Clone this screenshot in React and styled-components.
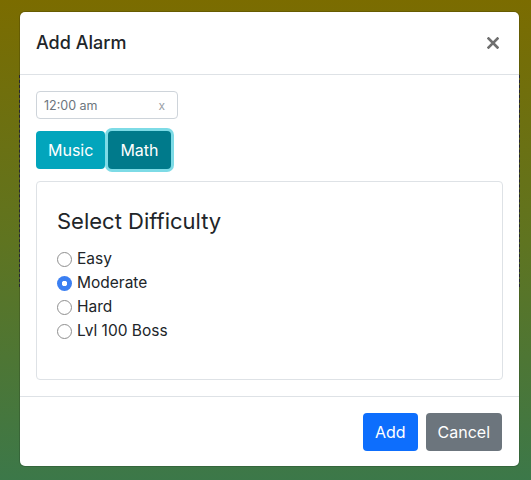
import React, { useState } from 'react';
import styled, { createGlobalStyle } from 'styled-components';

const GlobalStyle = createGlobalStyle`
  html, body {
    margin: 0;
    padding: 0;
  }
  body {
    font-family: Inter, "Liberation Sans", sans-serif;
    color: #212529;
  }
`;

const Backdrop = styled.div`
  position: relative;
  width: 531px;
  height: 480px;
  background: linear-gradient(180deg, #7b6c00 0%, #5f7420 50%, #3c7849 100%);
  padding: 12px 0 0 20px;
  box-sizing: border-box;
  overflow: hidden;
`;

/* faint dashed outline of the page content peeking out behind the dialog */
const GhostOutline = styled.div`
  position: absolute;
  left: 19px;
  top: 75px;
  width: 499px;
  height: 210px;
  border: 1px dashed #2e2e3e;
`;

const Dialog = styled.div`
  position: relative;
  width: 499px;
  background: #fff;
  border-radius: 5px;
  box-shadow: 0 0 0 1px rgba(0, 0, 0, 0.15);
  display: flex;
  flex-direction: column;
`;

const Header = styled.div`
  display: flex;
  align-items: center;
  justify-content: space-between;
  padding: 16px;
  border-bottom: 1px solid #dee2e6;
`;

const Title = styled.h5`
  margin: 0;
  font-size: 18px;
  font-weight: 500;
  line-height: 30px;
`;

const CloseButton = styled.button`
  border: 0;
  background: none;
  padding: 0;
  margin-right: 3px;
  width: 14px;
  height: 14px;
  display: flex;
  align-items: center;
  justify-content: center;
  cursor: pointer;
`;

const Body = styled.div`
  padding: 16px;
  display: flex;
  flex-direction: column;
  align-items: flex-start;
`;

const TimeField = styled.div`
  width: 142px;
  height: 28px;
  box-sizing: border-box;
  border: 1px solid #ced4da;
  border-radius: 4px;
  display: flex;
  align-items: center;
  justify-content: space-between;
  padding: 0 12px 0 7px;
  font-size: 12.5px;
  color: #6c757d;
`;

const ClearX = styled.span`
  font-size: 12px;
  color: #9aa0a6;
`;

const ModeRow = styled.div`
  display: flex;
  gap: 3px;
  margin-top: 12px;
`;

const ModeButton = styled.button`
  height: 38px;
  padding: 0 12px;
  border: 0;
  border-radius: 4px;
  font-family: inherit;
  font-size: 16px;
  color: #fff;
  background: ${(p) => (p.$active ? '#007a8b' : '#02a5bc')};
  box-shadow: ${(p) => (p.$active ? '0 0 0 3px #7ddbe6' : 'none')};
  cursor: pointer;
`;

const Card = styled.div`
  align-self: stretch;
  margin-top: 12px;
  border: 1px solid #dee2e6;
  border-radius: 4px;
  padding: 24px 20px 36px;
`;

const CardTitle = styled.h4`
  margin: 0 0 11px;
  font-size: 22px;
  font-weight: 400;
  line-height: 30px;
`;

const OptionList = styled.div`
  display: flex;
  flex-direction: column;
`;

const OptionLabel = styled.label`
  display: flex;
  align-items: center;
  gap: 5px;
  font-size: 15.5px;
  line-height: 24px;
  cursor: pointer;
`;

const Radio = styled.input.attrs({ type: 'radio' })`
  appearance: none;
  margin: 0;
  width: 15px;
  height: 15px;
  border-radius: 50%;
  border: 1px solid #8f8f8f;
  background: #fff;
  box-sizing: border-box;

  &:checked {
    border: 0;
    background: radial-gradient(circle, #fff 0 2.5px, #3b7ff2 3px);
  }
`;

const Footer = styled.div`
  display: flex;
  justify-content: flex-end;
  gap: 8px;
  padding: 16px 17px 15px;
  border-top: 1px solid #dee2e6;
`;

const ActionButton = styled.button`
  height: 38px;
  padding: 0 12px;
  border: 0;
  border-radius: 4px;
  font-family: inherit;
  font-size: 16px;
  color: #fff;
  background: ${(p) => (p.$variant === 'primary' ? '#0d6efd' : '#6c757d')};
  cursor: pointer;
`;

const levels = ['Easy', 'Moderate', 'Hard', 'Lvl 100 Boss'];

export default function App() {
  const [mode, setMode] = useState('Math');
  const [level, setLevel] = useState('Moderate');

  return (
    <>
      <GlobalStyle />
      <Backdrop>
        <GhostOutline />
        <Dialog>
          <Header>
            <Title>Add Alarm</Title>
            <CloseButton aria-label="Close">
              <svg width="12" height="12" viewBox="0 0 12 12">
                <path d="M1.5 1.5 L10.5 10.5 M10.5 1.5 L1.5 10.5" stroke="#6f6f6f" strokeWidth="2.6" strokeLinecap="square" />
              </svg>
            </CloseButton>
          </Header>
          <Body>
            <TimeField>
              <span>12:00 am</span>
              <ClearX>x</ClearX>
            </TimeField>
            <ModeRow>
              {['Music', 'Math'].map((m) => (
                <ModeButton key={m} $active={mode === m} onClick={() => setMode(m)}>
                  {m}
                </ModeButton>
              ))}
            </ModeRow>
            <Card>
              <CardTitle>Select Difficulty</CardTitle>
              <OptionList>
                {levels.map((l) => (
                  <OptionLabel key={l}>
                    <Radio name="difficulty" checked={level === l} onChange={() => setLevel(l)} />
                    {l}
                  </OptionLabel>
                ))}
              </OptionList>
            </Card>
          </Body>
          <Footer>
            <ActionButton $variant="primary">Add</ActionButton>
            <ActionButton>Cancel</ActionButton>
          </Footer>
        </Dialog>
      </Backdrop>
    </>
  );
}
